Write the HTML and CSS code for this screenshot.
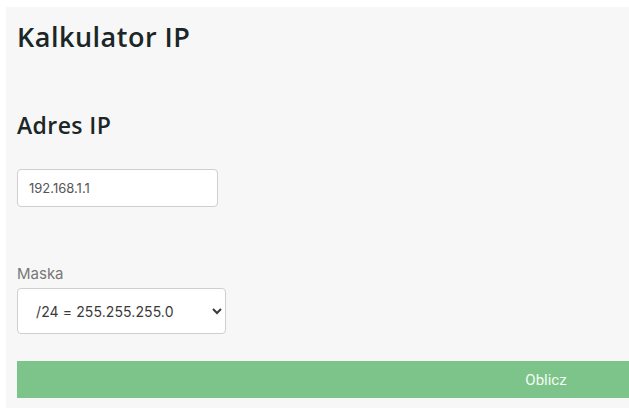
FILE: index.html
```html
<!DOCTYPE html>
<html lang="pl">
<head>
    <meta charset="UTF-8">
    <meta name="viewport" content="width=device-width, initial-scale=1.0">
    <title>Kalkulator IP</title>
    <link rel="stylesheet" href="styles.css">
</head>
<body>
    <div class="container">
        <h1>Kalkulator IP</h1>

        <h2>Adres IP</h2>
        <input type="text" class="ip-input" id="ipAddress" value="192.168.1.1">

        <label class="field-label" for="mask">Maska</label>
        <select class="mask-select" id="mask">
            <option>/8 = 255.0.0.0</option>
            <option>/16 = 255.255.0.0</option>
            <option selected>/24 = 255.255.255.0</option>
            <option>/32 = 255.255.255.255</option>
        </select>

        <button type="button" class="btn">Oblicz</button>
    </div>
</body>
</html>
```

FILE: styles.css
```css
* {
    margin: 0;
    padding: 0;
    box-sizing: border-box;
}

html, body {
    overflow: hidden;
}

body {
    font-family: "Open Sans", sans-serif;
    background: #fff;
    padding: 7px 0 0 6px;
}

.container {
    width: 1090px;
    background: #f7f7f7;
    padding: 11px 11px 10px;
    display: flex;
    flex-direction: column;
    align-items: flex-start;
}

h1 {
    font-size: 27px;
    font-weight: 600;
    letter-spacing: 0.5px;
    color: #1b2626;
    line-height: 38px;
    margin-bottom: 53px;
}

h2 {
    font-size: 23px;
    font-weight: 600;
    letter-spacing: 0.4px;
    color: #1b2626;
    line-height: 32px;
    margin-bottom: 28px;
}

.ip-input {
    width: 201px;
    height: 38px;
    padding: 0 11px;
    border: 1px solid #cfcfcf;
    border-radius: 4px;
    background: #fff;
    font-family: "Inter", sans-serif;
    font-size: 13px;
    color: #555;
    margin-bottom: 57px;
}

.field-label {
    font-family: "Inter", sans-serif;
    font-size: 15px;
    color: #777;
    margin-bottom: 5px;
}

.mask-select {
    width: 209px;
    height: 46px;
    padding: 0 8px 0 14px;
    border: 1px solid #cfcfcf;
    border-radius: 4px;
    background: #fff;
    font-family: "Inter", sans-serif;
    font-size: 14px;
    letter-spacing: 0.1px;
    color: #3a3a3a;
    margin-bottom: 27px;
}

.btn {
    width: 1058px;
    height: 37px;
    background: #7dc48b;
    color: #f4fbf4;
    border: none;
    font-family: Roboto, sans-serif;
    font-size: 15px;
    font-weight: 400;
    cursor: pointer;
}
```
